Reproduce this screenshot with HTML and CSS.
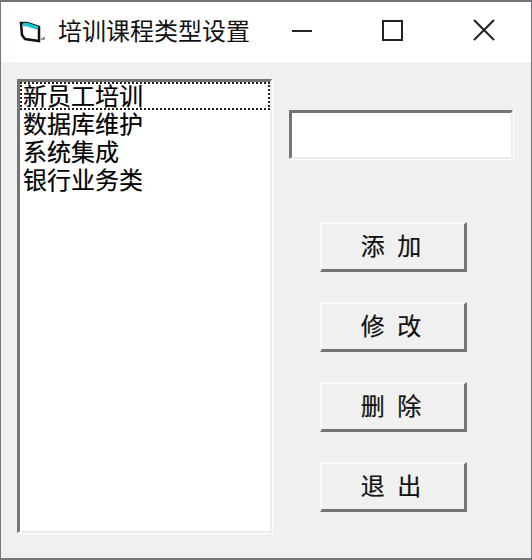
FILE: index.html
```html
<!DOCTYPE html>
<html lang="zh-CN">
<head>
<meta charset="UTF-8">
<meta name="viewport" content="width=device-width, initial-scale=1.0">
<title>培训课程类型设置</title>
<link rel="stylesheet" href="styles.css">
</head>
<body>

<div class="window">
    <div class="titleBar">
        <svg class="appIcon" width="28" height="24" viewBox="0 0 28 24">
            <path d="M4 3H10L22 7V21L8 19L5 15Z" fill="#fff" stroke="#111" stroke-width="2.5"/>
            <path d="M6 4.5H10L21 8" fill="none" stroke="#12c4cc" stroke-width="3.5"/>
            <path d="M24 19H27V17" fill="none" stroke="#999" stroke-width="2"/>
        </svg>
        <span class="titleText">培训课程类型设置</span>
        <div class="windowButtons">
            <svg class="windowButton" width="90" height="62" viewBox="0 0 90 62">
                <path d="M32 30H52" stroke="#222" stroke-width="2"/>
            </svg>
            <svg class="windowButton" width="90" height="62" viewBox="0 0 90 62">
                <rect x="33" y="20" width="19" height="19" fill="none" stroke="#222" stroke-width="2"/>
            </svg>
            <svg class="windowButton" width="90" height="62" viewBox="0 0 90 62">
                <path d="M34 19L54 39M54 19L34 39" stroke="#222" stroke-width="2"/>
            </svg>
        </div>
    </div>

    <div class="content">
        <ul class="listBox">
            <li class="listItem selected">新员工培训</li>
            <li class="listItem">数据库维护</li>
            <li class="listItem">系统集成</li>
            <li class="listItem">银行业务类</li>
        </ul>

        <div class="sidePanel">
            <input class="textBox" type="text">
            <div class="buttonColumn">
                <button class="actionButton">添 加</button>
                <button class="actionButton">修 改</button>
                <button class="actionButton">删 除</button>
                <button class="actionButton">退 出</button>
            </div>
        </div>
    </div>
</div>

</body>
</html>
```

FILE: styles.css
```css
* {
    box-sizing: border-box;
}

body {
    margin: 0;
    overflow: hidden;
    font-family: "Noto Sans CJK SC", "Liberation Sans", sans-serif;
}

.window {
    width: 532px;
    height: 560px;
    display: flex;
    flex-direction: column;
    background-color: #f0f0f0;
    border: 1px solid #73787a;
    border-top-width: 2px;
    border-bottom-width: 2px;
}

.titleBar {
    height: 60px;
    display: flex;
    align-items: center;
    background-color: #fff;
    padding-left: 16px;
}

.appIcon {
    flex: none;
}

.titleText {
    margin: 0 0 5px 13px;
    font-size: 24px;
    line-height: 30px;
    color: #111;
}

.windowButtons {
    margin-left: auto;
    display: flex;
    margin-right: 1px;
}

.windowButton {
    display: block;
}

.content {
    flex: 1;
    display: flex;
    padding: 17px 0 0 16px;
}

.listBox {
    width: 255px;
    height: 454px;
    margin: 0;
    padding: 0;
    list-style: none;
    background-color: #fff;
    border: solid;
    border-width: 3px 2px 2px 3px;
    border-color: #757575 #ececec #ececec #757575;
    box-shadow: 1px 1px 0 #fff;
}

.listItem {
    height: 28px;
    padding-left: 3px;
    font-size: 24px;
    line-height: 25px;
    color: #000;
    white-space: nowrap;
    -webkit-text-stroke: 0.2px #000;
}

.selected {
    outline: 2px dotted #222;
    outline-offset: -2px;
}

.sidePanel {
    margin-left: 17px;
    padding-top: 31px;
}

.textBox {
    display: block;
    width: 224px;
    height: 49px;
    background-color: #fff;
    border: solid;
    border-width: 3px 2px 2px 3px;
    border-color: #757575 #ececec #ececec #757575;
    box-shadow: 1px 1px 0 #fff;
    outline: none;
}

.buttonColumn {
    display: flex;
    flex-direction: column;
    gap: 30px;
    margin: 63px 0 0 31px;
}

.actionButton {
    width: 147px;
    height: 50px;
    padding: 0 4px 4px 0;
    font-family: inherit;
    font-size: 24px;
    line-height: 30px;
    word-spacing: 7px;
    color: #111;
    background-color: #f0f0f0;
    border: solid;
    border-width: 2px 3px 3px 2px;
    border-color: #fbfbfb #757575 #757575 #fbfbfb;
    -webkit-text-stroke: 0.2px #111;
}
```
